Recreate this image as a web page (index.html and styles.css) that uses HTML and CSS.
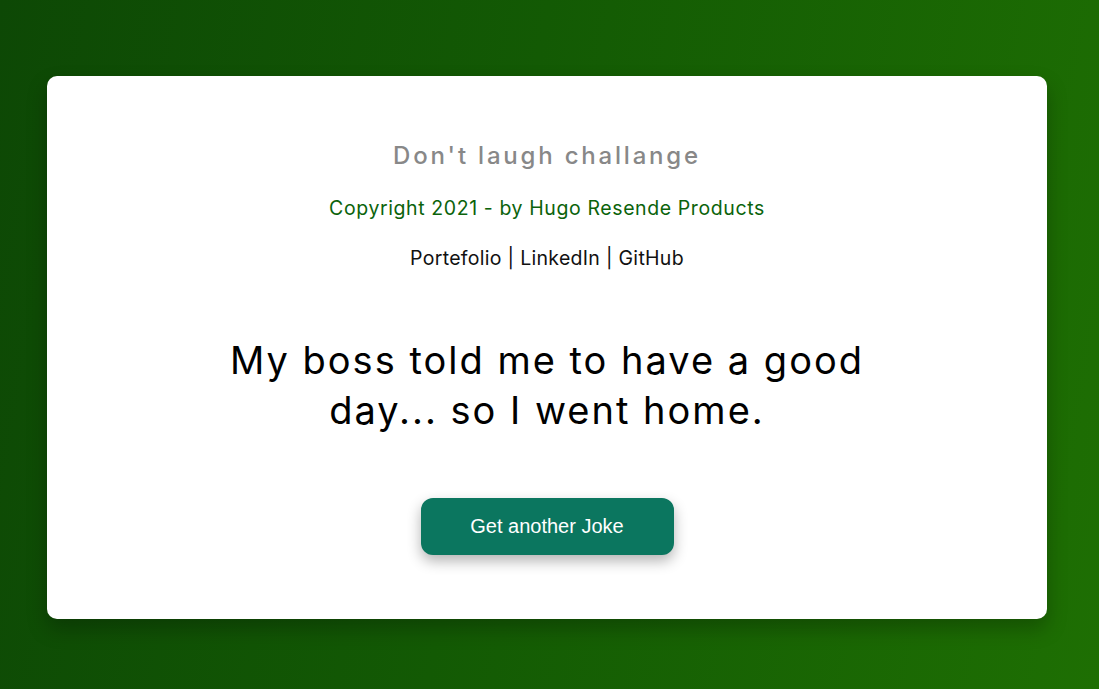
FILE: index.html
```html
<!DOCTYPE html>
<html lang="en">
<head>
<meta charset="utf-8">
<title>Don't laugh challange</title>
<link rel="stylesheet" href="styles.css">
</head>
<body>
<main class="card">
  <h1 class="title">Don't laugh challange</h1>
  <p class="copyright">Copyright 2021 - by Hugo Resende Products</p>
  <p class="links"><a href="#">Portefolio</a> | <a href="#">LinkedIn</a> | <a href="#">GitHub</a></p>
  <p class="joke">My boss told me to have a good day... so I went home.</p>
  <button class="btn" type="button">Get another Joke</button>
</main>
</body>
</html>
```
FILE: styles.css
```css
html, body {
  margin: 0;
  padding: 0;
  height: 100%;
}
body {
  background: linear-gradient(100deg, #0d4805 0%, #135a04 45%, #1e6f03 100%);
  font-family: Inter, "Noto Sans", sans-serif;
  display: flex;
  justify-content: flex-start;
  padding: 76px 0 0 47px;
  box-sizing: border-box;
}
.card {
  width: 1000px;
  height: 543px;
  background: #fff;
  border-radius: 10px;
  box-shadow: 0 10px 20px rgba(0, 0, 0, 0.25);
  display: flex;
  flex-direction: column;
  align-items: center;
  box-sizing: border-box;
  padding-top: 64px;
}
.title {
  margin: 0;
  font-size: 24px;
  font-weight: 500;
  letter-spacing: 2.8px;
  color: #888;
  line-height: 32px;
}
.copyright {
  margin: 23px 0 0;
  font-size: 19.5px;
  letter-spacing: 0.6px;
  color: #0b630b;
  line-height: 26px;
}
.links {
  margin: 24px 0 0;
  font-size: 19.5px;
  letter-spacing: 0.3px;
  color: #111;
  line-height: 26px;
}
.links a {
  color: #111;
  text-decoration: none;
}
.joke {
  margin: 64px 0 0;
  width: 720px;
  text-align: center;
  font-size: 38px;
  letter-spacing: 2px;
  line-height: 50px;
  color: #000;
}
.btn {
  margin-top: 63px;
  width: 253px;
  height: 57px;
  border: none;
  border-radius: 12px;
  background: #0b765f;
  color: #fff;
  font-family: "Liberation Sans", Arial, sans-serif;
  font-size: 20px;
  box-shadow: 0 6px 14px rgba(0, 0, 0, 0.3);
}
```
